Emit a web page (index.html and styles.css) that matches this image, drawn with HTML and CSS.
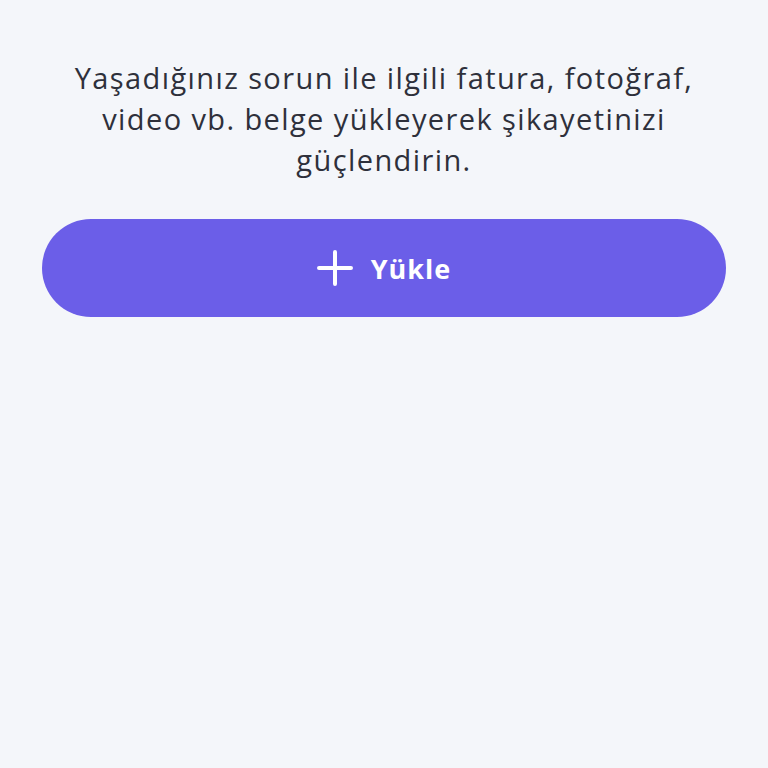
FILE: index.html
```html
<!DOCTYPE html>
<html lang="tr">
<head>
<meta charset="utf-8">
<link rel="stylesheet" href="styles.css">
</head>
<body>
<main class="page">
  <p class="desc">Yaşadığınız sorun ile ilgili fatura, fotoğraf, video vb. belge yükleyerek şikayetinizi güçlendirin.</p>
  <button class="upload" type="button">
    <svg class="plus" width="36" height="36" viewBox="0 0 36 36" aria-hidden="true">
      <path d="M18 2v32M2 18h32" stroke="#fff" stroke-width="4" stroke-linecap="round" fill="none"/>
    </svg>
    <span>Yükle</span>
  </button>
</main>
</body>
</html>
```
FILE: styles.css
```css
html, body {
  margin: 0;
  padding: 0;
  background: #f4f6fa;
}
.page {
  display: flex;
  flex-direction: column;
  align-items: center;
  padding: 57px 42px 0;
  font-family: "Open Sans", "Noto Sans", sans-serif;
}
.desc {
  margin: 0;
  width: 660px;
  text-align: center;
  font-size: 29px;
  line-height: 41px;
  color: #2e303b;
  letter-spacing: 1.4px;
}
.upload {
  margin-top: 39px;
  width: 684px;
  height: 98px;
  border: none;
  border-radius: 49px;
  background: #6b5ee8;
  color: #fff;
  display: flex;
  align-items: center;
  justify-content: center;
  gap: 18px;
  font-family: "Open Sans", "Noto Sans", sans-serif;
  font-weight: 700;
  font-size: 27px;
  letter-spacing: 1px;
  padding: 0;
}
.plus {
  display: block;
}
```
